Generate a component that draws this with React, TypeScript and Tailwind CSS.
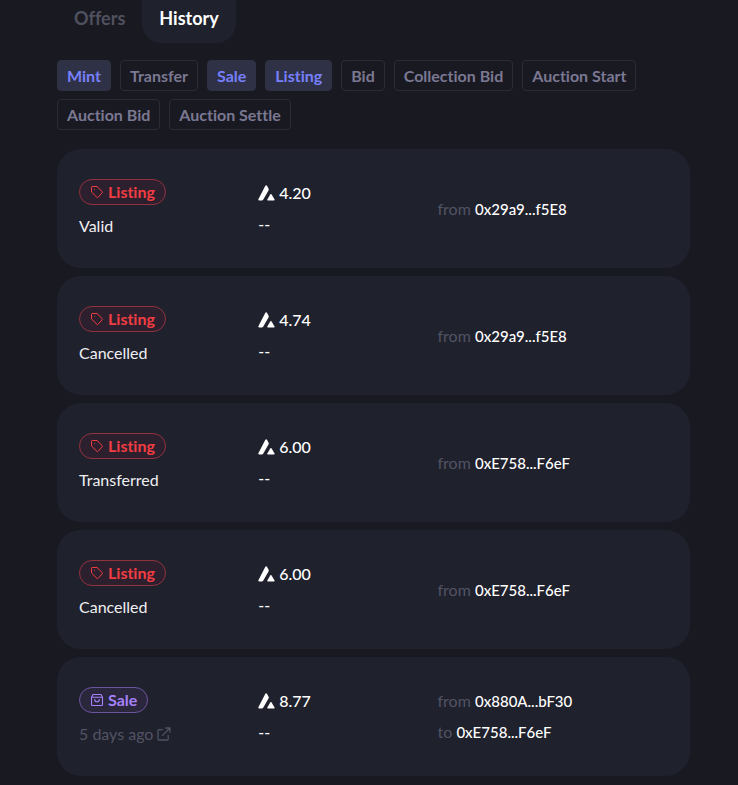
import React from "react";

type Kind = "Listing" | "Sale";

interface Activity {
  kind: Kind;
  status: string;
  price: string;
  from: string;
  to?: string;
}

const filters: { label: string; active: boolean }[] = [
  { label: "Mint", active: true },
  { label: "Transfer", active: false },
  { label: "Sale", active: true },
  { label: "Listing", active: true },
  { label: "Bid", active: false },
  { label: "Collection Bid", active: false },
  { label: "Auction Start", active: false },
  { label: "Auction Bid", active: false },
  { label: "Auction Settle", active: false },
];

const activities: Activity[] = [
  { kind: "Listing", status: "Valid", price: "4.20", from: "0x29a9...f5E8" },
  { kind: "Listing", status: "Cancelled", price: "4.74", from: "0x29a9...f5E8" },
  { kind: "Listing", status: "Transferred", price: "6.00", from: "0xE758...F6eF" },
  { kind: "Listing", status: "Cancelled", price: "6.00", from: "0xE758...F6eF" },
  { kind: "Sale", status: "5 days ago", price: "8.77", from: "0x880A...bF30", to: "0xE758...F6eF" },
];

function TagIcon() {
  return (
    <svg viewBox="0 0 14 14" className="size-[14px]" fill="none" stroke="currentColor" strokeLinejoin="round" aria-hidden="true">
      <path d="M1.5 2.2 Q1.5 1.5 2.2 1.5 L7 1.5 L12.2 6.6 Q12.8 7.2 12.2 7.8 L8.1 12.3 Q7.5 12.8 6.9 12.3 L1.5 7 Z" />
      <circle cx="4.4" cy="4.4" r="0.5" fill="currentColor" stroke="none" />
    </svg>
  );
}

function BagIcon() {
  return (
    <svg viewBox="0 0 14 14" className="size-[14px]" fill="none" stroke="currentColor" strokeWidth="1.1" strokeLinecap="round" strokeLinejoin="round" aria-hidden="true">
      <path d="M1.5 4.2 L3 1.5 H11 L12.5 4.2 V11.5 Q12.5 12.5 11.5 12.5 H2.5 Q1.5 12.5 1.5 11.5 Z M1.5 4.2 H12.5" />
      <path d="M4.7 6.6 Q4.9 8.8 7 8.8 Q9.1 8.8 9.3 6.6" />
    </svg>
  );
}

function ExternalIcon() {
  return (
    <svg viewBox="0 0 14 14" className="size-[14px]" fill="none" stroke="currentColor" strokeWidth="1.3" strokeLinecap="round" strokeLinejoin="round" aria-hidden="true">
      <path d="M5.5 2.6 H2 Q1 2.6 1 3.6 V12 Q1 13 2 13 H10.2 Q11.2 13 11.2 12 V8.4" />
      <path d="M5.6 8.4 L13 1 M8.8 1 H13 V5.2" />
    </svg>
  );
}

function AvaxIcon() {
  return (
    <svg viewBox="0 0 17 16" className="h-4 w-[17px]" fill="currentColor" aria-hidden="true">
      <path d="M7.2 1.1 Q8.2 -0.4 9.1 1.1 L10.6 3.8 Q11 4.7 10.5 5.6 L5.3 14.5 Q4.8 15.4 3.8 15.4 H1.2 Q-0.1 15.4 0.5 14.1 Z" />
      <path d="M12.2 9.4 Q12.9 8.4 13.6 9.4 L16.4 14.2 Q16.9 15.4 15.8 15.4 H10 Q8.9 15.4 9.5 14.2 Z" />
    </svg>
  );
}

function Badge({ kind }: { kind: Kind }) {
  const tone =
    kind === "Listing"
      ? "border-[#92323e] bg-[#2c202e] text-[#f23d42]"
      : "border-[#6d549f] bg-[#2a263c] text-[#a581fb]";
  return (
    <span className={`inline-flex h-[26px] items-center gap-1 rounded-full border px-[10px] font-bold ${tone}`}>
      {kind === "Listing" ? <TagIcon /> : <BagIcon />}
      {kind}
    </span>
  );
}

function Party({ label, address }: { label: string; address: string }) {
  return (
    <div>
      <span className="text-[#525363]">{label}</span>{" "}
      <a href="#account" className="text-[15px] font-medium text-white">{address}</a>
    </div>
  );
}

function ActivityCard({ item }: { item: Activity }) {
  const sold = item.kind === "Sale";
  return (
    <li className="grid h-[119px] grid-cols-[7fr_7fr_9fr] items-center rounded-3xl bg-[#1f212d] px-[22px] text-base leading-6">
      <div className="flex flex-col items-start gap-[9px]">
        <Badge kind={item.kind} />
        {sold ? (
          <a href="#transaction" className="flex items-center gap-1 text-[#525363]">
            {item.status}
            <ExternalIcon />
          </a>
        ) : (
          <span className="text-[#efeff2]">{item.status}</span>
        )}
      </div>
      <div className="flex flex-col gap-[7px] font-medium text-white">
        <span className="flex items-center gap-1">
          <AvaxIcon />
          {item.price}
        </span>
        <span>--</span>
      </div>
      <div className="flex flex-col gap-[7px]">
        <Party label="from" address={item.from} />
        {item.to && <Party label="to" address={item.to} />}
      </div>
    </li>
  );
}

export default function App() {
  return (
    <main className="min-h-screen bg-[#191922] pr-12 pb-2 pl-[57px] font-['Lato','Open_Sans',sans-serif] [font-variant-ligatures:none]">
      <nav className="flex h-[43px] text-lg font-bold">
        <button type="button" className="px-[17px] pb-2 text-[#50515f]">Offers</button>
        <button type="button" className="rounded-b-[20px] bg-[#1f212d] px-[17px] pb-2 text-white">History</button>
      </nav>
      <div className="mt-[17px] flex flex-wrap gap-x-[9px] gap-y-2">
        {filters.map((f) => (
          <button
            key={f.label}
            type="button"
            aria-pressed={f.active}
            className={`h-[31px] rounded-[4px] border px-[9px] text-base font-bold ${
              f.active ? "border-[#2f3042] bg-[#2f3147] text-[#7780fc]" : "border-[#2c2c39] text-[#7b7892]"
            }`}
          >
            {f.label}
          </button>
        ))}
      </div>
      <ul className="mt-[19px] flex flex-col gap-2">
        {activities.map((item, i) => (
          <ActivityCard key={i} item={item} />
        ))}
      </ul>
    </main>
  );
}
